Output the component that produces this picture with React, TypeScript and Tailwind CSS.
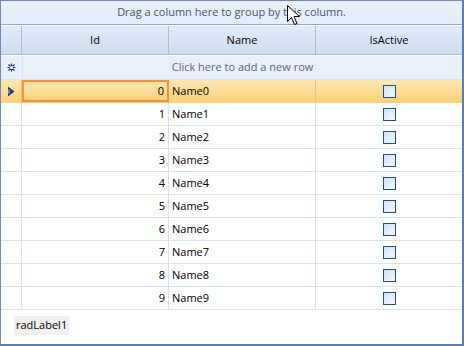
import React from 'react';

const rows = Array.from({ length: 10 }, (_, i) => ({ id: i, name: `Name${i}` }));

function CheckBox() {
  return (
    <div className="w-[13px] h-[13px] border border-[#1f4e85] bg-gradient-to-br from-[#d4e1f5] to-[#f4f8fd]" />
  );
}

export default function App() {
  return (
    <div
      className="relative w-[464px] h-[346px] bg-white border-t border-l border-[#6d8bb5] border-r-2 border-b-2 border-r-[#5b7db0] border-b-[#5b7db0] text-[11px] text-black overflow-hidden"
      style={{ fontFamily: '"Open Sans", "Noto Sans", sans-serif' }}
    >
      {/* group panel */}
      <div className="h-[24px] flex items-center justify-center bg-gradient-to-b from-[#e9f0fb] to-[#e3ecf9] border-b border-[#8ea8cc] text-[#4b5563]">
        Drag a column here to group by this column.
      </div>

      {/* header */}
      <div className="grid grid-cols-[21px_147px_147px_146px] h-[30px] bg-gradient-to-b from-[#e2ebf8] to-[#cddcf2] border-t border-white border-b border-b-[#a9bed9]">
        <div className="border-r border-[#a8bcd6]" />
        <div className="flex items-center justify-center border-r border-[#a8bcd6]">Id</div>
        <div className="flex items-center justify-center border-r border-[#a8bcd6]">Name</div>
        <div className="flex items-center justify-center">IsActive</div>
      </div>

      {/* new row */}
      <div className="grid grid-cols-[21px_440px] h-[24px] mt-px bg-[#e8f0fa] border-b border-[#d5e2f3]">
        <div className="flex items-center justify-center text-[#1e3a6a]">
          <svg width="9" height="9" viewBox="0 0 9 9">
            <path d="M4.5 0.5V8.5M0.5 4.5H8.5M1.5 1.5L7.5 7.5M7.5 1.5L1.5 7.5" stroke="#16365f" strokeWidth="1.2" />
            <circle cx="4.5" cy="4.5" r="1.6" fill="#fff" />
          </svg>
        </div>
        <div className="flex items-center justify-center text-[#5a6676] border-l border-[#d5e2f3]">
          Click here to add a new row
        </div>
      </div>

      {/* data rows */}
      {rows.map((r) => {
        const sel = r.id === 0;
        return (
          <div
            key={r.id}
            className={
              'grid grid-cols-[21px_147px_147px_146px] h-[23px] border-b ' +
              (sel
                ? 'bg-gradient-to-b from-[#fde8b0] to-[#fbd07a] border-[#fbd07a]'
                : 'bg-white border-[#d5e2f3]')
            }
          >
            <div className={'flex items-center justify-center border-r ' + (sel ? 'border-[#f4c26a]' : 'border-[#d5e2f3]')}>
              {sel && (
                <svg width="7" height="11" viewBox="0 0 7 11">
                  <path d="M0 0.5L6.5 5.5L0 10.5Z" fill="#163d6e" />
                  <rect x="0" y="3.5" width="2" height="4" fill="#fff" opacity="0.4" />
                </svg>
              )}
            </div>
            <div
              className={
                'flex items-center justify-end pr-[3px] ' +
                (sel ? 'border-2 border-[#f5913b]' : 'border-r border-[#d5e2f3]')
              }
            >
              {r.id}
            </div>
            <div className={'flex items-center pl-[3px] border-r ' + (sel ? 'border-[#f4c26a]' : 'border-[#d5e2f3]')}>
              {r.name}
            </div>
            <div className="flex items-center justify-center">
              <CheckBox />
            </div>
          </div>
        );
      })}

      {/* label */}
      <div className="px-[13px] pt-[6px]">
        <span className="inline-block bg-[#f0f0f0] px-[2px] py-[1px]">radLabel1</span>
      </div>

      {/* mouse cursor */}
      <svg className="absolute left-[286px] top-[4px]" width="14" height="22" viewBox="0 0 14 22">
        <path d="M0.5 0.5V16.5L4.5 12.5L7.5 19.5L10 18.5L7 11.5H12.5Z" fill="#fff" stroke="#000" strokeWidth="1" />
      </svg>
    </div>
  );
}
